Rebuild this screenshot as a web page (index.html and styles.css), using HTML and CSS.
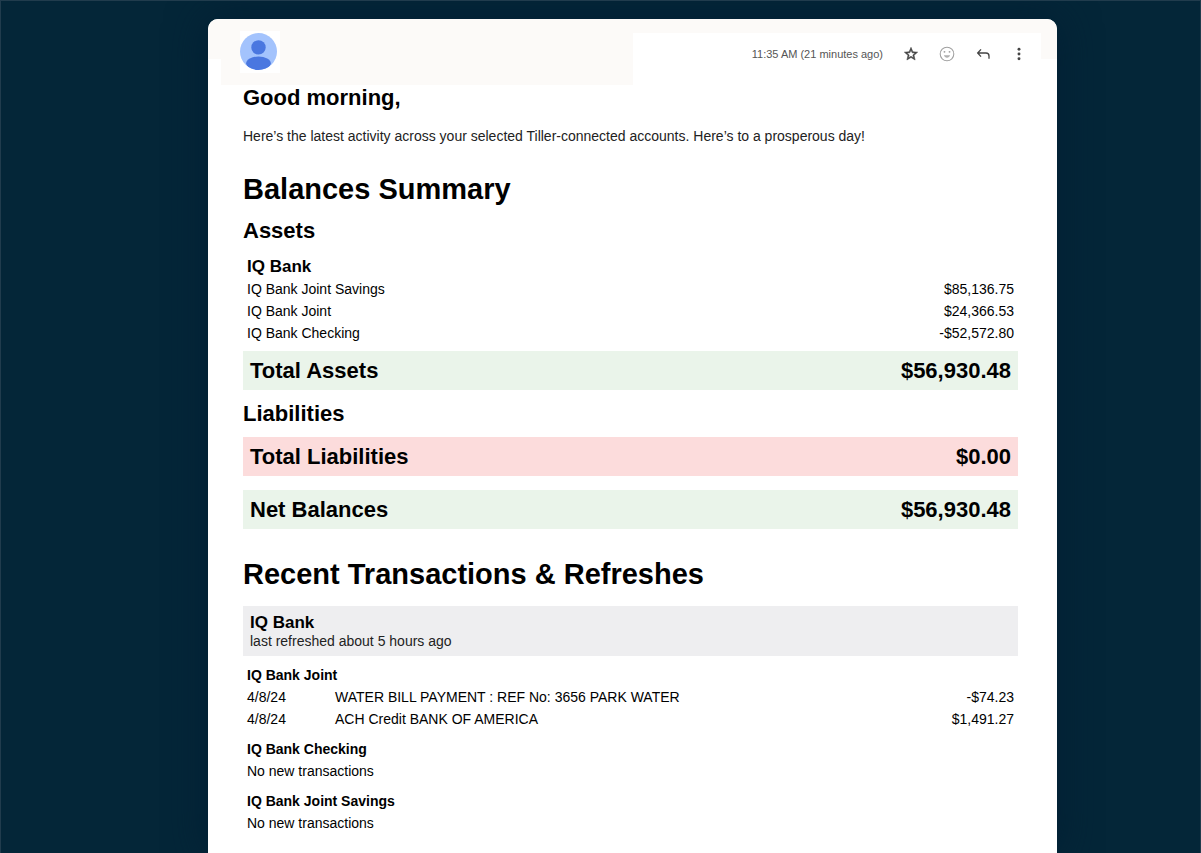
FILE: index.html
```html
<!DOCTYPE html>
<html lang="en">
<head>
<meta charset="utf-8">
<title>Daily balances</title>
<link rel="stylesheet" href="styles.css">
</head>
<body>
<main class="card">
  <header class="mail-header">
    <div class="sender">
      <span class="avatar-frame">
        <svg class="avatar" viewBox="0 0 36 36" role="img" aria-label="Sender">
          <defs><clipPath id="disc"><circle cx="18" cy="18" r="18"/></clipPath></defs>
          <circle cx="18" cy="18" r="18" fill="#a3c3fd"/>
          <g fill="#4a77e0" clip-path="url(#disc)">
            <circle cx="18" cy="14" r="7"/>
            <ellipse cx="18" cy="29.5" rx="12" ry="6.7"/>
          </g>
        </svg>
      </span>
    </div>
    <div class="toolbar">
      <time class="sent">11:35 AM (21 minutes ago)</time>
      <button class="icon" aria-label="Star">
        <svg viewBox="0 0 24 24"><path fill="#444" stroke="#444" stroke-width=".8" d="M22 9.24l-7.19-.62L12 2 9.19 8.63 2 9.24l5.46 4.73L5.82 21 12 17.27 18.18 21l-1.63-7.03L22 9.24zM12 15.4l-3.76 2.27 1-4.28-3.32-2.88 4.38-.38L12 6.1l1.71 4.04 4.38.38-3.32 2.88 1 4.28L12 15.4z"/></svg>
      </button>
      <button class="icon" aria-label="Add reaction">
        <svg viewBox="0 0 24 24" fill="none" stroke="#a0a0a0" stroke-width="1.6"><circle cx="12" cy="12" r="10.2"/><path d="M7.3 14h9.4c-.8 2.3-2.5 3.6-4.7 3.6s-3.9-1.3-4.7-3.6z" fill="#b0b0b0" stroke="none"/><circle cx="8.2" cy="8.8" r="1.4" fill="#a0a0a0" stroke="none"/><circle cx="15.8" cy="8.8" r="1.4" fill="#a0a0a0" stroke="none"/></svg>
      </button>
      <button class="icon" aria-label="Reply">
        <svg viewBox="0 0 24 24" fill="none" stroke="#444" stroke-width="2"><path d="M9 5l-5 5.500 5 5.500M4 10.500h12.500c2.500 0 4.500 2 4.500 4.500v4"/></svg>
      </button>
      <button class="icon" aria-label="More">
        <svg viewBox="0 0 24 24" fill="#444"><circle cx="12" cy="5" r="2.2"/><circle cx="12" cy="12" r="2.2"/><circle cx="12" cy="19" r="2.2"/></svg>
      </button>
    </div>
  </header>

  <div class="content">
    <h2 class="greeting">Good morning,</h2>
    <p class="intro">Here’s the latest activity across your selected Tiller-connected accounts. Here’s to a prosperous day!</p>

    <h1 class="title">Balances Summary</h1>
    <h2 class="subtitle">Assets</h2>
    <h3 class="bank">IQ Bank</h3>
    <table class="rows">
      <tr><td>IQ Bank Joint Savings</td><td class="amount">$85,136.75</td></tr>
      <tr><td>IQ Bank Joint</td><td class="amount">$24,366.53</td></tr>
      <tr><td>IQ Bank Checking</td><td class="amount">-$52,572.80</td></tr>
    </table>
    <div class="total good"><span>Total Assets</span><span>$56,930.48</span></div>
    <h2 class="subtitle">Liabilities</h2>
    <div class="total bad"><span>Total Liabilities</span><span>$0.00</span></div>
    <div class="total good net"><span>Net Balances</span><span>$56,930.48</span></div>

    <h1 class="title recent">Recent Transactions &amp; Refreshes</h1>
    <div class="refresh">
      <h3 class="refresh-bank">IQ Bank</h3>
      <p class="refresh-time">last refreshed about 5 hours ago</p>
    </div>
    <section class="account">
      <h4 class="account-name">IQ Bank Joint</h4>
      <table class="rows">
        <tr><td class="date">4/8/24</td><td>WATER BILL PAYMENT : REF No: 3656 PARK WATER</td><td class="amount">-$74.23</td></tr>
        <tr><td class="date">4/8/24</td><td>ACH Credit BANK OF AMERICA</td><td class="amount">$1,491.27</td></tr>
      </table>
    </section>
    <section class="account">
      <h4 class="account-name">IQ Bank Checking</h4>
      <p class="empty">No new transactions</p>
    </section>
    <section class="account">
      <h4 class="account-name">IQ Bank Joint Savings</h4>
      <p class="empty">No new transactions</p>
    </section>
  </div>
</main>
</body>
</html>
```
FILE: styles.css
```css
* { box-sizing: border-box; }
h1, h2, h3, h4, p { margin: 0; }

body {
  margin: 0;
  min-height: 100vh;
  display: grid;
  grid-template-columns: 207fr 849fr 143fr;
  padding-top: 18px;
  border: 1px solid #213c4d;
  background: #042638;
  color: #000;
  font-family: "Liberation Sans", Arial, sans-serif;
  font-size: 14px;
  line-height: 22px;
}

.card {
  grid-column: 2;
  min-width: 0;
  overflow: hidden;
  border-radius: 10px 10px 0 0;
  background: #fff;
  box-shadow: 0 0 40px #001e33;
}

.mail-header {
  display: flex;
  height: 66px;
  padding: 0 16px 0 13px;
  background: linear-gradient(#fcfaf8 40px, #fff 40px);
}
.sender {
  flex: 0 0 412px;
  padding: 12px 19px;
  background: #fcfaf8;
}
.avatar-frame {
  display: flex;
  width: 40px;
  height: 42px;
  padding-top: 2px;
  background: #fff;
}
.avatar { width: 37px; height: 37px; }

.toolbar {
  flex: 1;
  display: flex;
  align-items: center;
  justify-content: flex-end;
  gap: 20px;
  margin-top: 14px;
  padding: 0 14px 10px 0;
  background: #fff;
}
.sent {
  font-size: 11px;
  color: #555;
}
.icon {
  width: 16px;
  height: 16px;
  padding: 0;
  border: 0;
  background: none;
}
.icon svg { display: block; width: 16px; height: 16px; }

.content { padding: 0 39px 19px 35px; }

.greeting, .subtitle, .total {
  font-size: 22px;
  line-height: 27px;
  font-weight: bold;
}
.greeting { line-height: 25px; }
.intro { margin-top: 15px; color: #222; }

.title {
  margin-top: 25px;
  font-size: 29px;
  line-height: 35px;
}
.subtitle { margin-top: 10px; }
.bank {
  margin-top: 12px;
  padding-left: 4px;
  font-size: 17px;
  line-height: 22px;
}

.rows {
  width: 100%;
  border-collapse: collapse;
}
.rows td { padding: 0 4px; }
.rows .amount { text-align: right; }
.rows .date { width: 88px; }

.total {
  display: flex;
  justify-content: space-between;
  margin-top: 7px;
  padding: 6px 7px;
}
.good { background: #eaf4ea; }
.bad { margin-top: 10px; background: #fcdcdc; }
.net { margin-top: 14px; }

.recent { margin-top: 28px; }
.refresh {
  margin-top: 14px;
  padding: 7px 7px 6px;
  background: #eeeef0;
}
.refresh-bank { font-size: 17px; line-height: 19px; }
.refresh-time { line-height: 18px; color: #222; }

.account { margin-top: 8px; }
.account-name, .empty { padding-left: 4px; }
.account-name { font-size: 14px; }
```
